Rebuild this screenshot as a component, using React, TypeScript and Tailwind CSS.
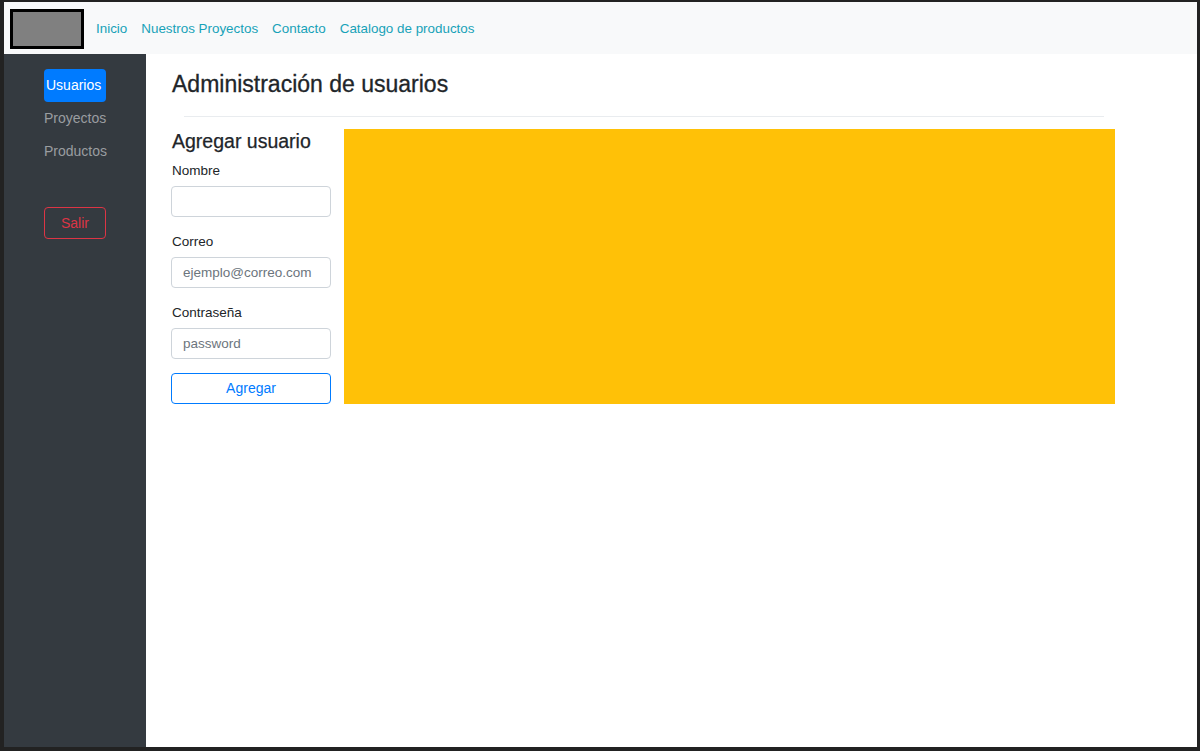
export default function App() {
  const font = { fontFamily: '"Liberation Sans", Arial, sans-serif' };
  return (
    <div
      className="h-[751px] w-[1200px] bg-[#222222] pt-[2px] pl-[4px] pr-[3px] pb-[4px] flex flex-col overflow-hidden"
      style={font}
    >
      <nav className="h-[52px] shrink-0 bg-[#f8f9fa] flex items-center pl-[6px]">
        <div className="mt-[1px] w-[74px] h-[40px] border-[3px] border-black bg-[#808080]" />
        <ul className="flex items-center gap-[14px] ml-[12px] pt-[3px] text-[13.4px] text-[#17a2b8]">
          <li>Inicio</li>
          <li>Nuestros Proyectos</li>
          <li>Contacto</li>
          <li>Catalogo de productos</li>
        </ul>
      </nav>
      <div className="flex flex-1 min-h-0">
        <aside className="w-[142px] shrink-0 bg-[#343a40] pt-[15px] pl-[40px]">
          <div className="flex flex-col items-start text-[14px]">
            <span className="bg-[#007bff] text-white rounded-[4px] px-[2px] h-[33px] w-[62px] flex items-center">Usuarios</span>
            <span className="text-[#9a9da0] h-[33px] flex items-center">Proyectos</span>
            <span className="text-[#9a9da0] h-[33px] flex items-center">Productos</span>
          </div>
          <button className="mt-[39px] w-[62px] h-[32px] border border-[#dc3545] rounded-[4px] text-[#dc3545] text-[14px]">
            Salir
          </button>
        </aside>
        <main className="flex-1 bg-white pl-[25px] pt-[15px]">
          <h3 className="ml-[1px] text-[23px] text-[#212529] leading-[30px] [-webkit-text-stroke:0.3px_#212529]">
            Administración de usuarios
          </h3>
          <hr className="mt-[17px] ml-[13px] w-[920px] border-t border-[#e9ecef]" />
          <div className="flex mt-[11px]">
            <form className="w-[160px]">
              <h4 className="ml-[1px] text-[19.5px] text-[#212529] leading-[26px] [-webkit-text-stroke:0.25px_#212529]">
                Agregar usuario
              </h4>
              <label className="block mt-[7px] ml-[1px] text-[13.5px] text-[#212529]">Nombre</label>
              <input className="mt-[5px] block w-[160px] h-[31px] border border-[#ced4da] rounded-[4px] px-[11px] text-[13px]" />
              <label className="block mt-[15px] ml-[1px] text-[13.5px] text-[#212529]">Correo</label>
              <input
                className="mt-[4px] block w-[160px] h-[31px] border border-[#ced4da] rounded-[4px] px-[11px] text-[13.5px] placeholder:text-[#6c757d]"
                placeholder="ejemplo@correo.com"
              />
              <label className="block mt-[15px] ml-[1px] text-[13.5px] text-[#212529]">Contraseña</label>
              <input
                className="mt-[5px] block w-[160px] h-[31px] border border-[#ced4da] rounded-[4px] px-[11px] text-[13.5px] placeholder:text-[#6c757d]"
                placeholder="password"
              />
              <button
                type="button"
                className="mt-[14px] w-[160px] h-[31px] border border-[#007bff] rounded-[4px] text-[#007bff] text-[14px]"
              >
                Agregar
              </button>
            </form>
            <div className="ml-[13px] mt-[1px] w-[771px] h-[275px] bg-[#ffc107]" />
          </div>
        </main>
      </div>
    </div>
  );
}
